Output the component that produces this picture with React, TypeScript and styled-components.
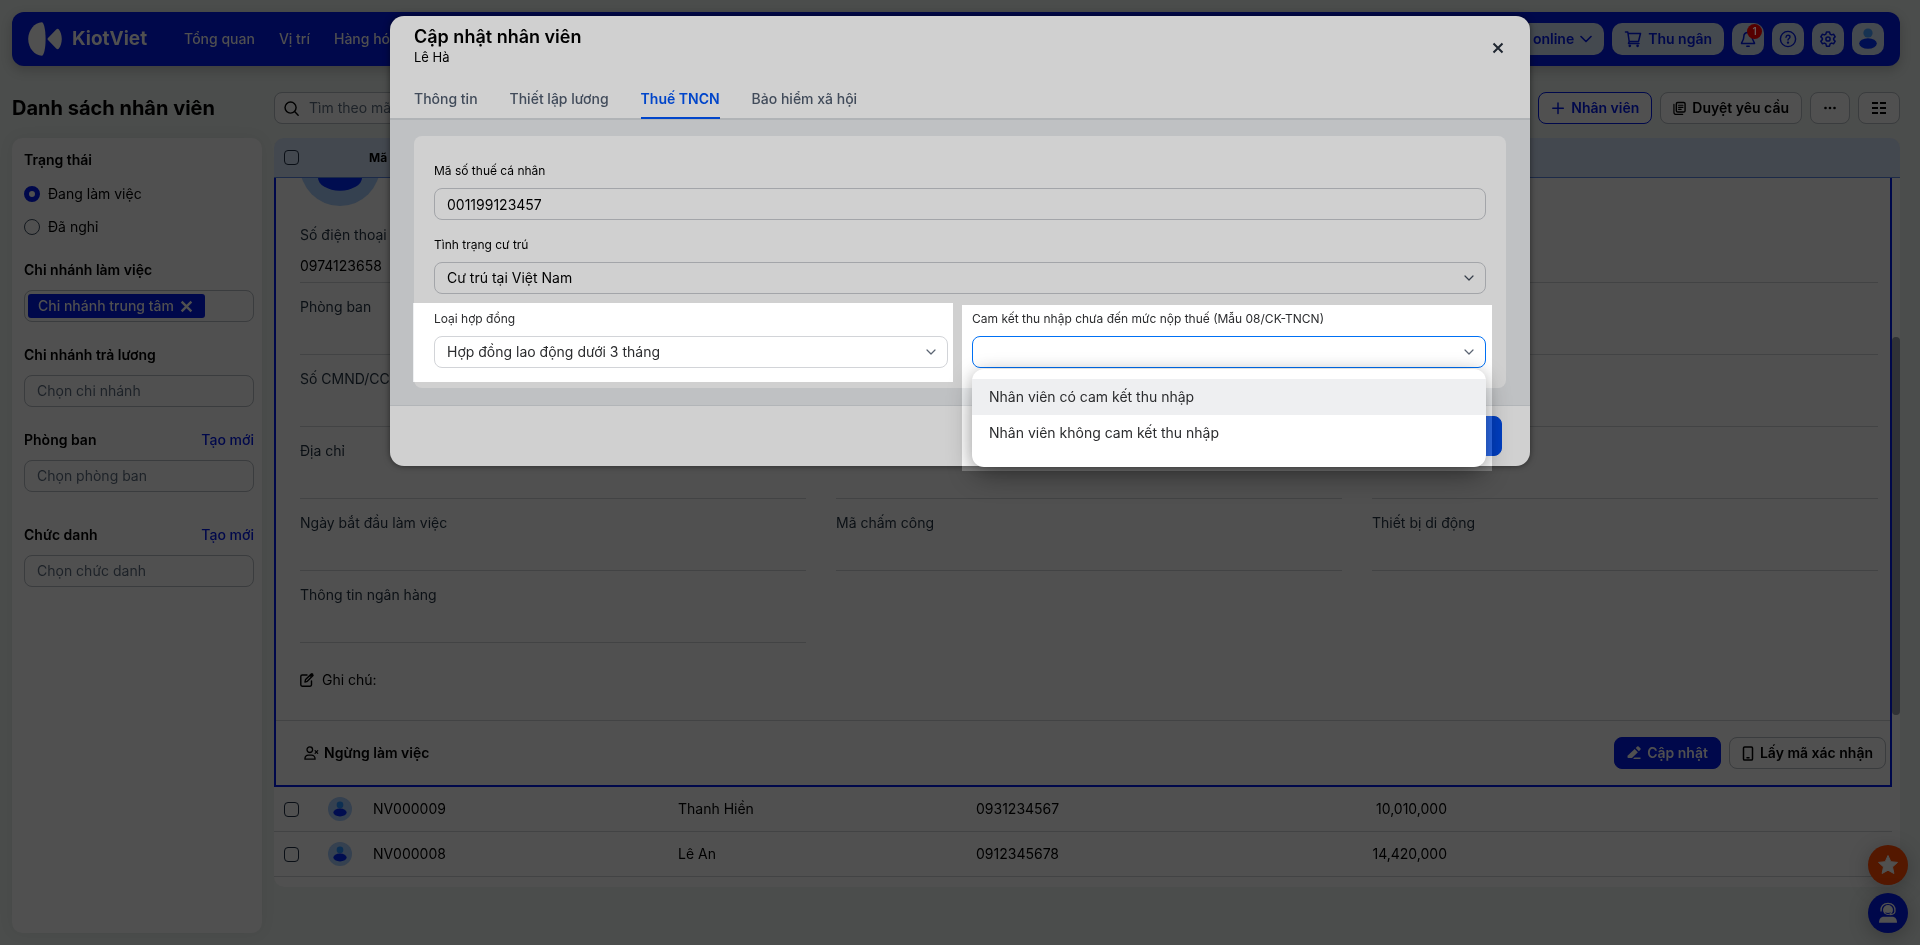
import React from 'react';
import styled, { createGlobalStyle, css } from 'styled-components';

const c = {
  page: '#4b4d4c',
  surface: '#505050',
  line: '#424344',
  border: '#3a3c3e',
  brand: '#00084b',
  pill: '#44494f',
  ink: '#000000',
  muted: '#0b1015',
  hint: '#1d2228',
  modal: '#d0d0d0',
  modalBand: '#bfc1c3',
  modalBorder: '#a3a5a9',
  modalBlue: '#0045ca',
};

const GlobalStyle = createGlobalStyle`
  *, *::before, *::after { box-sizing: border-box; }
  html, body, #root { height: 100%; }
  body {
    margin: 0;
    background: ${c.page};
    color: ${c.ink};
    font-family: Inter, "Noto Sans", sans-serif;
    font-size: 14px;
    line-height: 20px;
    overflow: hidden;
  }
  button, input, select { font: inherit; color: inherit; margin: 0; }
  button { cursor: pointer; }
  a { color: inherit; text-decoration: none; }
  svg { display: block; flex: none; }
`;

/* ---------- page frame ---------- */

const Page = styled.div`
  display: flex;
  flex-direction: column;
  min-height: 100%;
  padding: 12px 20px 12px 12px;
`;

const TopBar = styled.header`
  display: flex;
  align-items: center;
  height: 54px;
  padding: 0 16px;
  border-radius: 12px;
  background: ${c.brand};
  color: ${c.surface};
  box-shadow: 0 4px 12px rgba(0, 0, 0, 0.2);
`;

const Brand = styled.a`
  display: flex;
  align-items: center;
  gap: 10px;
  font-size: 19px;
  font-weight: 700;
`;

const Nav = styled.nav`
  display: flex;
  gap: 24px;
  margin-left: 37px;
  font-weight: 500;
`;

const TopActions = styled.div`
  display: flex;
  gap: 8px;
  margin-left: auto;
`;

const TopButton = styled.button<{ $icon?: boolean }>`
  position: relative;
  display: flex;
  align-items: center;
  justify-content: center;
  gap: 6px;
  height: 32px;
  width: ${(p) => (p.$icon ? '32px' : 'auto')};
  padding: ${(p) => (p.$icon ? '0' : '0 12px')};
  border: 0;
  border-radius: 10px;
  background: ${c.pill};
  color: ${c.brand};
  font-weight: 600;
`;

const Badge = styled.span`
  position: absolute;
  top: 1px;
  right: 2px;
  width: 15px;
  height: 15px;
  border-radius: 50%;
  background: #560000;
  color: #6a5c5c;
  font-size: 10px;
  line-height: 15px;
  text-align: center;
`;

const Workspace = styled.div`
  display: grid;
  grid-template-columns: 250px minmax(0, 1fr);
  grid-template-rows: 32px 1fr;
  gap: 14px 12px;
  flex: 1;
  margin-top: 26px;
`;

const PageTitle = styled.h1`
  margin: 0;
  font-size: 20px;
  line-height: 32px;
  font-weight: 700;
`;

const Toolbar = styled.div`
  display: flex;
  justify-content: space-between;
`;

const SearchBox = styled.label`
  display: flex;
  align-items: center;
  gap: 10px;
  width: 400px;
  padding: 0 9px;
  border: 1px solid ${c.border};
  border-radius: 8px;
  background: ${c.surface};
`;

const BareInput = styled.input`
  flex: 1;
  min-width: 0;
  padding: 0;
  border: 0;
  outline: 0;
  background: transparent;
  &::placeholder { color: ${c.hint}; opacity: 1; }
`;

const ButtonRow = styled.div`
  display: flex;
  gap: 8px;
`;

const Button = styled.button<{ $tone?: 'outline' | 'solid' }>`
  display: flex;
  align-items: center;
  justify-content: center;
  gap: 6px;
  height: 32px;
  padding: 0 12px;
  border: 1px solid ${c.border};
  border-radius: 8px;
  background: ${c.surface};
  font-weight: 600;
  ${(p) => p.$tone === 'outline' && css`
    border-color: ${c.brand};
    color: ${c.brand};
  `}
  ${(p) => p.$tone === 'solid' && css`
    border-color: ${c.brand};
    background: ${c.brand};
    color: ${c.surface};
  `}
`;

/* ---------- filters ---------- */

const Filters = styled.aside`
  display: flex;
  flex-direction: column;
  gap: 23px;
  padding: 12px 8px 12px 12px;
  border-radius: 10px;
  background: ${c.surface};
  box-shadow: 0 0 16px rgba(0, 0, 0, 0.06);
`;

const FilterGroup = styled.section<{ $far?: boolean }>`
  padding-top: ${(p) => (p.$far ? 10 : 0)}px;
`;

const FilterHead = styled.div`
  display: flex;
  justify-content: space-between;
  margin-bottom: 10px;
`;

const FilterTitle = styled.h2`
  margin: 0;
  font-size: 14px;
  line-height: 20px;
  font-weight: 600;
`;

const CreateLink = styled.a`
  color: ${c.brand};
  font-weight: 500;
`;

const RadioList = styled.div`
  display: grid;
  gap: 13px;
  margin-top: 14px;
`;

const RadioRow = styled.label`
  display: flex;
  align-items: center;
  gap: 8px;
`;

const Radio = styled.input`
  appearance: none;
  width: 16px;
  height: 16px;
  border: 1px solid #14191f;
  border-radius: 50%;
  &:checked { border: 5px solid ${c.brand}; background: ${c.surface}; }
`;

const FilterField = styled.div`
  display: flex;
  align-items: center;
  height: 32px;
  padding: 0 3px;
  border: 1px solid ${c.border};
  border-radius: 8px;
`;

const Chip = styled.span`
  display: flex;
  align-items: center;
  gap: 6px;
  height: 24px;
  padding: 0 12px 0 10px;
  border-radius: 3px;
  background: ${c.brand};
  color: ${c.surface};
  font-weight: 500;
`;

const ChipRemove = styled.button`
  padding: 0;
  border: 0;
  background: none;
`;

const FilterInput = styled(BareInput)`
  padding-left: 9px;
`;

/* ---------- list ---------- */

const Panel = styled.main`
  align-self: start;
  border-radius: 10px;
  overflow: hidden;
  background: ${c.surface};
`;

const HeadBar = styled.div`
  height: 40px;
  border-bottom: 1px solid #1c2a48;
  background: #43484f;
`;

const Table = styled.table`
  width: 100%;
  border-collapse: separate;
  border-spacing: 0;
  table-layout: fixed;
  text-align: left;
`;

const HeadCell = styled.th`
  height: 39px;
  padding: 0;
  font-size: 12px;
  font-weight: 700;
`;

const Cell = styled.td<{ $end?: boolean }>`
  height: 45px;
  padding: 0 0 0 4px;
  border-bottom: 1px solid ${c.line};
  text-align: ${(p) => (p.$end ? 'right' : 'left')};
`;

const ListBody = styled.div`
  display: flex;
  padding-bottom: 10px;
`;

const ListContent = styled.div`
  flex: 1;
  min-width: 0;
`;

const ScrollTrack = styled.div`
  width: 8px;
  padding-top: 159px;
`;

const ScrollThumb = styled.div`
  height: 378px;
  border-radius: 4px;
  background: #303236;
`;

const Tick = styled.input<{ $head?: boolean }>`
  appearance: none;
  display: block;
  width: 15px;
  height: 15px;
  margin: 0 0 0 ${(p) => (p.$head ? 10 : 6)}px;
  border: 1px solid #0a0f16;
  border-radius: 4px;
`;

const Detail = styled.section`
  border: 2px solid ${c.brand};
  border-top: 0;
`;

const AvatarCrop = styled.div`
  display: flex;
  align-items: flex-end;
  height: 28px;
  margin-left: 24px;
  overflow: hidden;
`;

const Fields = styled.dl`
  display: grid;
  grid-template-columns: repeat(3, 1fr);
  column-gap: 30px;
  margin: 5px 12px 0 24px;
`;

const FieldCell = styled.div`
  height: 72px;
  padding-top: 14px;
  border-bottom: 1px solid ${c.line};
`;

const FieldName = styled.dt`
  color: ${c.muted};
`;

const FieldValue = styled.dd`
  margin: 11px 0 0;
`;

const Note = styled.div`
  display: flex;
  align-items: center;
  gap: 8px;
  height: 78px;
  padding: 0 0 4px 24px;
  border-bottom: 1px solid ${c.line};
`;

const DetailFooter = styled.footer`
  display: flex;
  align-items: center;
  justify-content: space-between;
  height: 64px;
  padding: 0 4px 0 28px;
`;

const PlainButton = styled.button`
  display: flex;
  align-items: center;
  gap: 5px;
  padding: 0;
  border: 0;
  background: none;
  font-weight: 600;
`;

/* ---------- floating help ---------- */

const Floating = styled.div`
  position: absolute;
  right: 12px;
  bottom: 12px;
  display: flex;
  flex-direction: column;
  gap: 8px;
`;

const RoundButton = styled.button<{ $color: string }>`
  display: flex;
  align-items: center;
  justify-content: center;
  width: 40px;
  height: 40px;
  padding: 0;
  border: 0;
  border-radius: 50%;
  background: ${(p) => p.$color};
  color: ${c.surface};
  box-shadow: 0 4px 20px rgba(0, 0, 0, 0.25);
`;

/* ---------- dialog ---------- */

const DialogLayer = styled.div`
  position: absolute;
  top: 16px;
  left: 0;
  right: 0;
  display: flex;
  justify-content: center;
`;

const Dialog = styled.section`
  width: 1140px;
  max-width: 100%;
  border-radius: 14px;
  background: ${c.modal};
  box-shadow: 0 0 6px rgba(0, 0, 0, 0.5);
`;

const DialogHead = styled.header`
  display: flex;
  align-items: flex-start;
  justify-content: space-between;
  height: 69px;
  padding: 9px 24px 0;
`;

const DialogTitle = styled.h2`
  margin: 0;
  font-size: 18px;
  line-height: 24px;
  font-weight: 600;
`;

const DialogSub = styled.p`
  margin: 0;
  font-size: 13px;
  line-height: 16px;
`;

const CloseButton = styled.button`
  display: grid;
  place-items: center;
  width: 16px;
  height: 16px;
  margin-top: 15px;
  padding: 0;
  border: 0;
  background: none;
  color: #1f2630;
`;

const Tabs = styled.div`
  display: flex;
  gap: 32px;
  height: 35px;
  padding: 0 24px;
  border-bottom: 2px solid #b0b3b6;
`;

const Tab = styled.button<{ $active?: boolean }>`
  height: 34px;
  padding: 0 0 4px;
  border: 0;
  border-bottom: 2px solid ${(p) => (p.$active ? c.modalBlue : 'transparent')};
  background: none;
  color: ${(p) => (p.$active ? c.modalBlue : '#414b5a')};
  font-weight: ${(p) => (p.$active ? 600 : 500)};
`;

const DialogBody = styled.div`
  padding: 16px 24px 17px;
  background: ${c.modalBand};
  border-bottom: 1px solid #b2b5b8;
`;

const FormCard = styled.form`
  display: grid;
  grid-template-columns: 1fr 1fr;
  gap: 16px 24px;
  padding: 26px 20px 20px;
  border-radius: 8px;
  background: ${c.modal};
`;

const FormField = styled.div<{ $wide?: boolean; $lit?: boolean }>`
  --field: ${(p) => (p.$lit ? '#ffffff' : c.modal)};
  --edge: ${(p) => (p.$lit ? '#d2d4d8' : c.modalBorder)};
  --focus: ${(p) => (p.$lit ? '#0070f4' : c.modalBlue)};
  --arrow: ${(p) => (p.$lit ? '#5b6472' : '#363e4a')};
  position: relative;
  grid-column: ${(p) => (p.$wide ? '1 / -1' : 'auto')};
  color: ${(p) => (p.$lit ? '#2b2c2e' : c.ink)};
`;

const FormLabel = styled.label`
  position: relative;
  display: block;
  margin-bottom: 8px;
  font-size: 12px;
  line-height: 18px;
`;

const controlBox = css`
  position: relative;
  display: block;
  width: 100%;
  height: 32px;
  padding: 0 12px;
  border: 1px solid var(--edge);
  border-radius: 8px;
  outline: 0;
  background: var(--field);
`;

const TextInput = styled.input`${controlBox}`;

const SelectBox = styled.select<{ $focus?: boolean }>`
  ${controlBox}
  appearance: none;
  ${(p) => p.$focus && css`border-color: var(--focus);`}
`;

const SelectArrow = styled.span`
  position: absolute;
  right: 12px;
  bottom: 10px;
  color: var(--arrow);
  pointer-events: none;
`;

const Options = styled.ul`
  position: absolute;
  top: 59px;
  left: 0;
  right: 0;
  margin: 0;
  padding: 10px 0 16px;
  list-style: none;
  border-radius: 12px;
  background: var(--field);
  box-shadow: 0 10px 28px -4px rgba(0, 0, 0, 0.45), 0 0 14px rgba(0, 0, 0, 0.12);
`;

const Option = styled.li<{ $active?: boolean }>`
  padding: 8px 17px;
  background: ${(p) => (p.$active ? '#eeeff1' : 'transparent')};
`;

/* Brightens whatever lies under it, so the guided step stands out. */
const Spotlight = styled.div<{ $inset: string }>`
  position: absolute;
  inset: ${(p) => p.$inset};
  background: #2f2f2f;
  mix-blend-mode: plus-lighter;
  pointer-events: none;
`;

const DialogFooter = styled.footer`
  display: flex;
  justify-content: flex-end;
  gap: 8px;
  padding: 10px 28px;
`;

const DialogButton = styled.button<{ $primary?: boolean }>`
  height: 40px;
  padding: 0 28px;
  border: 1px solid ${(p) => (p.$primary ? '#003ebf' : c.modalBorder)};
  border-radius: 8px;
  background: ${(p) => (p.$primary ? '#003ebf' : c.modal)};
  color: ${(p) => (p.$primary ? c.modal : c.ink)};
  font-weight: 600;
`;

/* ---------- drawings ---------- */

const Logo = () => (
  <svg width="34" height="34" viewBox="0 0 34 34" fill="currentColor">
    <path d="M13.800.2C15.800.2 17.600 7.500 17.600 17s-1.800 16.800-3.800 16.800C6.500 33.400.2 26 .2 17S6.500.6 13.800.2Z" />
    <path d="M20 16 28.200 7.500c1-1 2-1 2.700 0 1.600 2.200 2.900 5.500 2.900 9.500s-1.300 7.300-2.900 9.500c-.7 1-1.700 1-2.700 0L20 18c-.6-.7-.6-1.300 0-2Z" />
  </svg>
);

const Person = ({ size }: { size: number }) => (
  <svg width={size} height={size} viewBox="0 0 24 24">
    <circle cx="12" cy="12" r="12" fill="#354150" />
    <circle cx="12" cy="7.900" r="3.300" fill="#0d2f52" />
    <ellipse cx="12" cy="15.500" rx="6.600" ry="3.900" fill="#000d50" />
  </svg>
);

const UserGlyph = () => (
  <svg width="20" height="22" viewBox="0 0 20 22">
    <circle cx="10" cy="5" r="4.600" fill="#173352" />
    <ellipse cx="10" cy="15.500" rx="8.800" ry="5.200" fill="#000f52" />
  </svg>
);

const stroke = { fill: 'none', stroke: 'currentColor', strokeLinecap: 'round', strokeLinejoin: 'round' } as const;

const Chevron = ({ width, weight }: { width: number; weight: number }) => (
  <svg width={width} height={12} viewBox={`0 0 ${width} 12`} {...stroke} strokeWidth={weight}>
    <path d={`M1 ${6 - width / 4 + 0.5} ${width / 2} ${6 + width / 4 - 0.5} ${width - 1} ${6 - width / 4 + 0.5}`} />
  </svg>
);

const Cross = ({ size, weight }: { size: number; weight: number }) => (
  <svg width={size} height={size} viewBox="0 0 12 12" {...stroke} strokeLinecap="butt" strokeWidth={weight}>
    <path d="M1.500 1.500l9 9M10.500 1.500l-9 9" />
  </svg>
);

const Cart = () => (
  <svg width="18" height="18" viewBox="0 0 18 18" {...stroke} strokeWidth="1.500">
    <path d="M1.500 2h2.300l1.400 9.500h9.300L16.500 3.500H4.100M5.200 11.500l-.7 2h10.500" />
    <circle cx="5.800" cy="15.800" r=".6" fill="currentColor" />
    <circle cx="13.600" cy="15.800" r=".6" fill="currentColor" />
  </svg>
);

const Bell = () => (
  <svg width="16" height="18" viewBox="0 0 16 18" {...stroke} strokeWidth="1.500">
    <path d="M8 2.500c-2.700 0-4.200 1.900-4.200 4.300 0 4-2.300 5-2.300 6.700h13c0-1.700-2.300-2.700-2.300-6.700C12.200 4.400 10.700 2.500 8 2.500Z" />
    <path d="M6.800 16.300h2.400" />
  </svg>
);

const Help = () => (
  <svg width="18" height="18" viewBox="0 0 18 18" {...stroke} strokeWidth="1.400">
    <circle cx="9" cy="9" r="7.600" />
    <path d="M7 7.200C7.100 6 7.900 5.300 9 5.300s2 .7 2 1.700c0 1.400-2 1.500-2 3" />
    <circle cx="9" cy="12.600" r=".5" fill="currentColor" />
  </svg>
);

const Gear = () => (
  <svg width="18" height="18" viewBox="0 0 24 24" {...stroke} strokeWidth="2">
    <path d="M10 2.500h4l.8 2.900 1.900 1.100 2.900-.8 2 3.400-2.100 2.100v1.600l2.100 2.100-2 3.400-2.900-.8-1.900 1.100-.8 2.900h-4l-.8-2.900-1.900-1.100-2.900.8-2-3.400 2.100-2.100v-1.600L2.400 9.100l2-3.400 2.900.8 1.900-1.100Z" />
    <circle cx="12" cy="12" r="2.800" />
  </svg>
);

const Magnifier = () => (
  <svg width="15" height="15" viewBox="0 0 16 16" {...stroke} strokeWidth="1.500">
    <circle cx="7" cy="7" r="5.900" />
    <path d="m11.300 11.300 3.800 3.800" />
  </svg>
);

const Plus = () => (
  <svg width="14" height="14" viewBox="0 0 14 14" {...stroke} strokeWidth="1.500">
    <path d="M7 2v10.500M1.800 7.300h10.500" />
  </svg>
);

const Copies = () => (
  <svg width="13" height="15" viewBox="0 0 14 16" {...stroke} strokeWidth="1.500">
    <rect x="3.600" y="1.500" width="9.400" height="10.300" rx="1.500" />
    <path d="M1 3.600v8.400c0 1.500.8 2.400 2.400 2.400h7M6 4.500h4.700M6 6.700h4.700M6 8.900h2.800" strokeWidth="1.300" />
  </svg>
);

const Dots = () => (
  <svg width="14" height="4" viewBox="0 0 14 4" fill="currentColor">
    <circle cx="2.500" cy="2" r="1.300" /><circle cx="7" cy="2" r="1.300" /><circle cx="11.500" cy="2" r="1.300" />
  </svg>
);

const Columns = () => (
  <svg width="16" height="14" viewBox="0 0 16 14" fill="currentColor">
    <path d="M1 1h6v2H1zM9 1h6v2H9zM1 6h6v2H1zM9 6h6v2H9zM1 11h6v2H1zM9 11h6v2H9z" />
  </svg>
);

const NoteIcon = () => (
  <svg width="14" height="14" viewBox="0 0 14 14" {...stroke} strokeWidth="1.400">
    <path d="M7 2H2.200C1.300 2 .8 2.500.8 3.400v8.400c0 .9.500 1.400 1.400 1.400h7.900c.9 0 1.400-.5 1.400-1.400V8" />
    <path d="m5 9 .6-2.500L11.300.9 13 2.600 7.300 8.300Z" fill={c.surface} />
    <path d="m10.600 2.700 1.600-1.400" strokeWidth="2.200" />
  </svg>
);

const PersonOff = () => (
  <svg width="15" height="14" viewBox="0 0 15 14" {...stroke} strokeWidth="1.300">
    <circle cx="5.800" cy="3.700" r="2.800" />
    <path d="M.9 13.200c0-2.600 1.600-4 3.700-4h2.800c2.100 0 3.700 1.400 3.700 4Z" />
    <path d="m11.100 4.700 2.600 2.600M13.700 4.700l-2.600 2.600" strokeWidth="1.200" />
  </svg>
);

const Pencil = () => (
  <svg width="14" height="14" viewBox="0 0 14 14" fill="currentColor">
    <path d="M7.700 3 10.900 6.200 5 12H1.200q-.7 0-.7-.7V9.800ZM8.700 2l1.500-1.500q.7-.6 1.400 0l1.800 1.800q.6.700 0 1.400L11.900 5.200Z" />
    <path d="M7.500 11.500h6V13h-7.500Z" />
  </svg>
);

const Phone = () => (
  <svg width="12" height="15" viewBox="0 0 12 15" {...stroke} strokeWidth="1.500">
    <rect x="1.500" y=".9" width="9" height="13.200" rx="1.200" />
    <path d="M5 11.800h2" />
  </svg>
);

const Star = () => (
  <svg width="22" height="22" viewBox="0 0 22 22" fill="currentColor" stroke="currentColor" strokeWidth="1" strokeLinejoin="round">
    <path d="m11 1.500 2.800 6.200 6.700.7-5 4.500 1.400 6.600L11 16.200l-5.900 3.300 1.400-6.600-5-4.500 6.700-.7Z" />
  </svg>
);

const Support = () => (
  <svg width="20" height="22" viewBox="0 0 20 22" fill="currentColor">
    <path d="M1 20.800c0-4 2-6 4.800-6h8.400c2.800 0 4.800 2 4.800 6Z" />
    <circle cx="10" cy="8" r="5" />
    <path d="M3 9.500C2.300 4.500 5.500 1.300 10 1.300s7.700 3.200 7 8.200c-.3 2-1.700 3.200-5.400 3.200" fill="none" stroke="currentColor" strokeWidth="1.300" />
    <path d="M7.500 10.800c1.500.9 3.500.9 5 0" fill="none" stroke={c.brand} strokeWidth="1" />
  </svg>
);

/* ---------- data ---------- */

const fields = [
  ['Số điện thoại', '0974123658'], ['', ''], ['', ''],
  ['Phòng ban', ''], ['', ''], ['', ''],
  ['Số CMND/CCCD', ''], ['', ''], ['', ''],
  ['Địa chỉ', ''], ['', ''], ['', ''],
  ['Ngày bắt đầu làm việc', ''], ['Mã chấm công', ''], ['Thiết bị di động', ''],
  ['Thông tin ngân hàng', ''],
];

const employees = [
  { code: 'NV000009', name: 'Thanh Hiền', phone: '0931234567', amount: '10,010,000' },
  { code: 'NV000008', name: 'Lê An', phone: '0912345678', amount: '14,420,000' },
];

const pickers = [
  { id: 'pay-branch', title: 'Chi nhánh trả lương', hint: 'Chọn chi nhánh' },
  { id: 'department', title: 'Phòng ban', hint: 'Chọn phòng ban', create: true },
  { id: 'position', title: 'Chức danh', hint: 'Chọn chức danh', create: true, far: true },
];

const tabs = ['Thông tin', 'Thiết lập lương', 'Thuế TNCN', 'Bảo hiểm xã hội'];

const columnWidths = [50, 45, 305, 298, 171, 304];

const ListColumns = () => (
  <colgroup>
    {columnWidths.map((width, i) => <col key={i} width={width} />)}
    <col />
  </colgroup>
);

const EmployeeForm = () => (
  <DialogLayer>
    <Dialog role="dialog" aria-labelledby="dialog-title">
      <DialogHead>
        <div>
          <DialogTitle id="dialog-title">Cập nhật nhân viên</DialogTitle>
          <DialogSub>Lê Hà</DialogSub>
        </div>
        <CloseButton aria-label="Đóng"><Cross size={12} weight={2} /></CloseButton>
      </DialogHead>
      <Tabs role="tablist">
        {tabs.map((t) => (
          <Tab key={t} role="tab" aria-selected={t === 'Thuế TNCN'} $active={t === 'Thuế TNCN'}>{t}</Tab>
        ))}
      </Tabs>
      <DialogBody>
        <FormCard>
          <FormField $wide>
            <FormLabel htmlFor="tax-code">Mã số thuế cá nhân</FormLabel>
            <TextInput id="tax-code" defaultValue="001199123457" />
          </FormField>
          <FormField $wide>
            <FormLabel htmlFor="residence">Tình trạng cư trú</FormLabel>
            <SelectBox id="residence"><option>Cư trú tại Việt Nam</option></SelectBox>
            <SelectArrow><Chevron width={10} weight={1.2} /></SelectArrow>
          </FormField>
          <FormField $lit>
            <Spotlight $inset="-7px -5px -14px -21px" />
            <FormLabel htmlFor="contract">Loại hợp đồng</FormLabel>
            <SelectBox id="contract"><option>Hợp đồng lao động dưới 3 tháng</option></SelectBox>
            <SelectArrow><Chevron width={10} weight={1.2} /></SelectArrow>
          </FormField>
          <FormField $lit>
            <Spotlight $inset="-5px -6px -103px -10px" />
            <FormLabel htmlFor="commitment">Cam kết thu nhập chưa đến mức nộp thuế (Mẫu 08/CK-TNCN)</FormLabel>
            <SelectBox id="commitment" $focus><option /></SelectBox>
            <SelectArrow><Chevron width={10} weight={1.2} /></SelectArrow>
            <Options role="listbox">
              <Option role="option" aria-selected $active>Nhân viên có cam kết thu nhập</Option>
              <Option role="option" aria-selected={false}>Nhân viên không cam kết thu nhập</Option>
            </Options>
          </FormField>
        </FormCard>
      </DialogBody>
      <DialogFooter>
        <DialogButton>Bỏ qua</DialogButton>
        <DialogButton $primary>Lưu</DialogButton>
      </DialogFooter>
    </Dialog>
  </DialogLayer>
);

export default function App() {
  return (
    <>
      <GlobalStyle />
      <Page>
        <TopBar>
          <Brand href="#"><Logo />KiotViet</Brand>
          <Nav>
            <a href="#">Tổng quan</a>
            <a href="#">Vị trí</a>
            <a href="#">Hàng hóa</a>
          </Nav>
          <TopActions>
            <TopButton>Bán online <Chevron width={12} weight={1.6} /></TopButton>
            <TopButton><Cart />Thu ngân</TopButton>
            <TopButton $icon aria-label="Thông báo"><Bell /><Badge>1</Badge></TopButton>
            <TopButton $icon aria-label="Trợ giúp"><Help /></TopButton>
            <TopButton $icon aria-label="Thiết lập"><Gear /></TopButton>
            <TopButton $icon aria-label="Tài khoản"><UserGlyph /></TopButton>
          </TopActions>
        </TopBar>

        <Workspace>
          <PageTitle>Danh sách nhân viên</PageTitle>
          <Toolbar>
            <SearchBox><Magnifier /><BareInput placeholder="Tìm theo mã, tên nhân viên" /></SearchBox>
            <ButtonRow>
              <Button $tone="outline"><Plus />Nhân viên</Button>
              <Button><Copies />Duyệt yêu cầu</Button>
              <Button aria-label="Thêm"><Dots /></Button>
              <Button aria-label="Cột hiển thị"><Columns /></Button>
            </ButtonRow>
          </Toolbar>

          <Filters>
            <FilterGroup>
              <FilterTitle>Trạng thái</FilterTitle>
              <RadioList>
                <RadioRow><Radio type="radio" name="status" defaultChecked />Đang làm việc</RadioRow>
                <RadioRow><Radio type="radio" name="status" />Đã nghỉ</RadioRow>
              </RadioList>
            </FilterGroup>
            <FilterGroup>
              <FilterHead><FilterTitle>Chi nhánh làm việc</FilterTitle></FilterHead>
              <FilterField>
                <Chip>Chi nhánh trung tâm<ChipRemove aria-label="Bỏ chọn"><Cross size={13} weight={2.2} /></ChipRemove></Chip>
              </FilterField>
            </FilterGroup>
            {pickers.map((p) => (
              <FilterGroup key={p.id} $far={p.far}>
                <FilterHead>
                  <FilterTitle as="label" htmlFor={p.id}>{p.title}</FilterTitle>
                  {p.create && <CreateLink href="#">Tạo mới</CreateLink>}
                </FilterHead>
                <FilterField><FilterInput id={p.id} placeholder={p.hint} /></FilterField>
              </FilterGroup>
            ))}
          </Filters>

          <Panel>
            <HeadBar>
              <Table>
                <ListColumns />
                <thead>
                  <tr>
                    <HeadCell><Tick $head type="checkbox" aria-label="Chọn tất cả" /></HeadCell>
                    <HeadCell />
                    <HeadCell>Mã nhân viên</HeadCell>
                    <HeadCell colSpan={4} />
                  </tr>
                </thead>
              </Table>
            </HeadBar>
            <ListBody>
              <ListContent>
                <Detail>
                  <AvatarCrop><Person size={80} /></AvatarCrop>
                  <Fields>
                    {fields.map(([name, value], i) => (
                      <FieldCell key={i}>
                        <FieldName>{name}</FieldName>
                        <FieldValue>{value}</FieldValue>
                      </FieldCell>
                    ))}
                  </Fields>
                  <Note><NoteIcon />Ghi chú:</Note>
                  <DetailFooter>
                    <PlainButton><PersonOff />Ngừng làm việc</PlainButton>
                    <ButtonRow>
                      <Button $tone="solid"><Pencil />Cập nhật</Button>
                      <Button><Phone />Lấy mã xác nhận</Button>
                    </ButtonRow>
                  </DetailFooter>
                </Detail>
                <Table>
                  <ListColumns />
                  <tbody>
                    {employees.map((e) => (
                      <tr key={e.code}>
                        <Cell><Tick type="checkbox" aria-label={e.code} /></Cell>
                        <Cell><Person size={24} /></Cell>
                        <Cell>{e.code}</Cell>
                        <Cell>{e.name}</Cell>
                        <Cell>{e.phone}</Cell>
                        <Cell $end>{e.amount}</Cell>
                        <Cell />
                      </tr>
                    ))}
                  </tbody>
                </Table>
              </ListContent>
              <ScrollTrack><ScrollThumb /></ScrollTrack>
            </ListBody>
          </Panel>
        </Workspace>
      </Page>
      <Floating>
        <RoundButton $color="#541800" aria-label="Đánh giá"><Star /></RoundButton>
        <RoundButton $color={c.brand} aria-label="Hỗ trợ"><Support /></RoundButton>
      </Floating>
      <EmployeeForm />
    </>
  );
}
